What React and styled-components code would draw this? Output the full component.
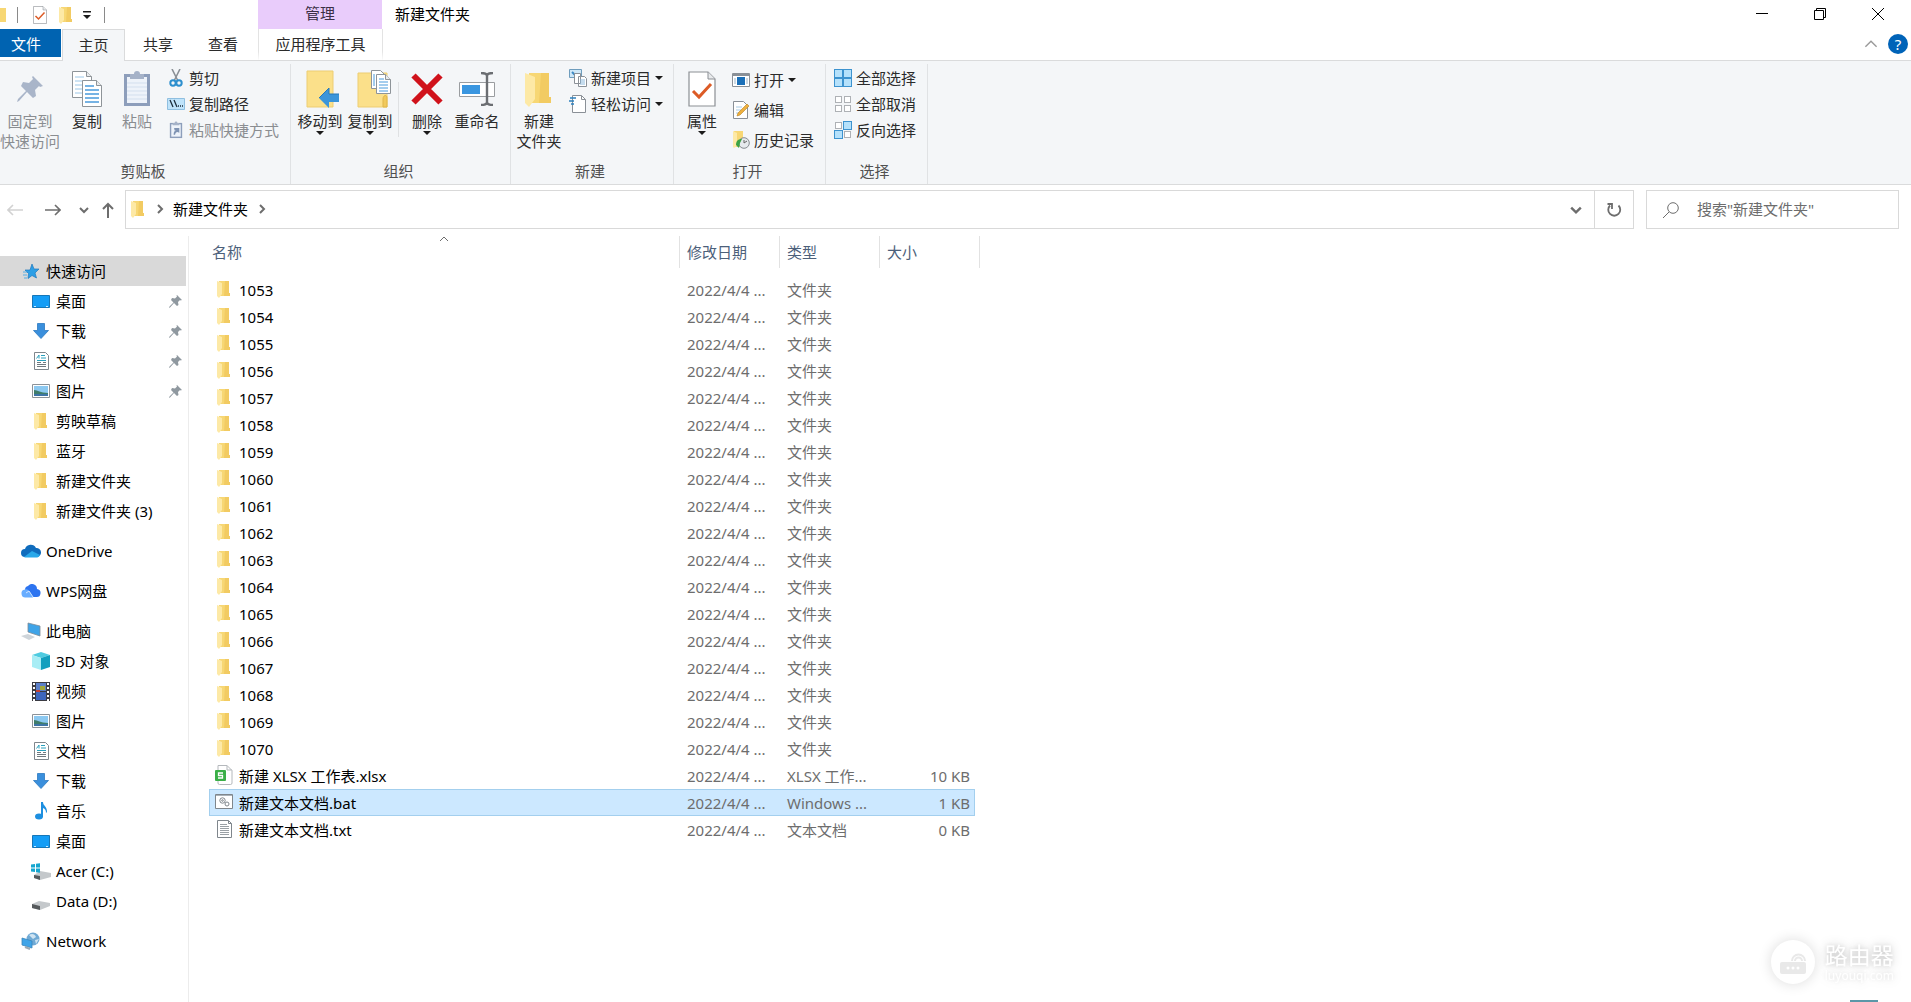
import React from "react";
import styled, { createGlobalStyle, css } from "styled-components";

const GlobalStyle = createGlobalStyle`
  *, *::before, *::after { box-sizing: border-box; }
  body {
    margin: 0;
    background: #fff;
    color: #1b1b1b;
    font: 15px/20px "Noto Sans", "Noto Sans CJK SC", sans-serif;
  }
  button, input { font: inherit; color: inherit; }
  svg { display: block; flex: none; }
`;

/* ---------- shared ---------- */

const PlainButton = styled.button`
  display: flex;
  align-items: center;
  justify-content: center;
  margin: 0;
  padding: 0;
  border: 0;
  background: transparent;
  white-space: nowrap;
`;

const Window = styled.div`
  display: flex;
  flex-direction: column;
  min-height: 100vh;
`;

/* ---------- title bar and tabs ---------- */

const TitleBar = styled.header`
  display: flex;
  height: 29px;
  padding-right: 4px;
`;

const QuickBar = styled.div`
  display: flex;
  align-items: center;
  width: 258px;
`;

const QuickButton = styled(PlainButton)`
  width: ${(p) => p.$width || 25}px;
  height: 29px;
`;

const QuickRule = styled.span`
  width: 1px;
  height: 16px;
  background: #8a8a8a;
`;

const ContextTitle = styled.div`
  display: flex;
  align-items: center;
  justify-content: center;
  width: 124px;
  padding-bottom: 4px;
  background: #e9ccfb;
  color: #3b2f45;
`;

const WindowTitle = styled.h1`
  flex: 1;
  margin: 0;
  padding: 4px 13px;
  font-size: 15px;
  font-weight: 400;
  line-height: 20px;
  color: #000;
`;

const WindowButton = styled(PlainButton)`
  width: 58px;
  height: 28px;
`;

const TabRow = styled.nav`
  display: flex;
  height: 31px;
`;

const Tab = styled(PlainButton)`
  width: ${(p) => p.$width}px;
  padding-bottom: 2px;
  border: 1px solid transparent;
  border-bottom: 0;
  color: #2b2b2b;
  ${(p) =>
    p.$kind === "file" &&
    css`
      height: 28px;
      margin-right: 1px;
      background: #0063b1;
      color: #fff;
      padding-right: 9px;
      padding-bottom: 0;
    `}
  ${(p) =>
    p.$kind === "active" &&
    css`
      height: 32px;
      border-color: #dadbdc;
      background: #f4f6f8;
      z-index: 1;
    `}
  ${(p) =>
    p.$kind === "context" &&
    css`
      margin-left: 3px;
      border-image: linear-gradient(#e3e3e3, #e3e3e3 70%, #fff) 1;
      border-width: 0 1px;
    `}
`;

const TabTools = styled.div`
  display: flex;
  align-items: center;
  gap: 10px;
  margin-left: auto;
  padding: 0 3px 2px 0;
`;

const HelpButton = styled(PlainButton)`
  width: 20px;
  height: 20px;
  border-radius: 50%;
  background: #0063b8;
  color: #fff;
`;

/* ---------- ribbon ---------- */

const Ribbon = styled.section`
  display: flex;
  height: 125px;
  padding-top: 3px;
  border: solid #dadbdc;
  border-width: 1px 0;
  background: #f4f6f8;
`;

const Group = styled.div`
  display: flex;
  flex-direction: column;
  justify-content: space-between;
  width: ${(p) => p.$width}px;
  border-right: 1px solid #e0e2e4;
  padding-bottom: 3px;
`;

const GroupBody = styled.div`
  display: flex;
  height: 94px;
  padding-left: ${(p) => p.$inset || 0}px;
`;

const GroupLabel = styled.div`
  padding-right: 4px;
  text-align: center;
  color: #505050;
`;

const BigButton = styled(PlainButton)`
  flex-direction: column;
  justify-content: flex-start;
  width: ${(p) => p.$width || 50}px;
  padding-top: 2px;
  color: ${(p) => (p.$muted ? "#8a8d91" : "#2b2b2b")};
`;

const BigIcon = styled.span`
  display: flex;
  align-items: center;
  justify-content: center;
  height: 45px;
`;

const SmallList = styled.div`
  display: flex;
  flex-direction: column;
  padding: 1px 0 0 ${(p) => p.$inset}px;
`;

const SmallButton = styled(PlainButton)`
  justify-content: flex-start;
  gap: 4px;
  height: ${(p) => p.$height || 26}px;
  color: ${(p) => (p.$muted ? "#8a8d91" : "#2b2b2b")};
`;

const BodyRule = styled.span`
  width: 1px;
  height: 55px;
  margin: 18px 3px 0;
  background: #dfe1e3;
`;

/* ---------- address row ---------- */

const AddressRow = styled.div`
  display: flex;
  padding: 5px 12px 5px 0;
`;

const NavButtons = styled.div`
  display: flex;
  align-items: center;
  width: 125px;
`;

const NavButton = styled(PlainButton)`
  width: ${(p) => p.$width}px;
  height: 39px;
`;

const AddressBox = styled.div`
  display: flex;
  flex: 1;
  height: 39px;
  border: 1px solid #d9d9d9;
`;

const Crumbs = styled.div`
  display: flex;
  align-items: center;
  flex: 1;
  padding: 0 0 2px 5px;
`;

const Crumb = styled(PlainButton)`
  padding: 0 9px 0 8px;
  color: #000;
`;

const CrumbArrow = styled.span`
  display: flex;
  padding-left: ${(p) => p.$inset || 0}px;
`;

const AddressTool = styled(PlainButton)`
  width: ${(p) => p.$width}px;
  border-left: ${(p) => (p.$ruled ? "1px solid #d9d9d9" : "0")};
`;

const SearchBox = styled.label`
  display: flex;
  align-items: center;
  gap: 18px;
  width: 253px;
  height: 39px;
  margin-left: 12px;
  padding-left: 16px;
  border: 1px solid #d9d9d9;
`;

const SearchInput = styled.input`
  flex: 1;
  min-width: 0;
  height: 37px;
  padding: 0 0 2px;
  border: 0;
  outline: 0;
  background: transparent;
  &::placeholder { color: #6d6d6d; opacity: 1; }
`;

/* ---------- body ---------- */

const Body = styled.div`
  display: flex;
  flex: 1;
  padding-top: 2px;
`;

const Sidebar = styled.nav`
  display: flex;
  flex-direction: column;
  gap: 10px;
  width: 189px;
  padding: 20px 2px 0 0;
  border-right: 1px solid #ececec;
`;

const SideGroup = styled.div`
  display: flex;
  flex-direction: column;
`;

const SideLink = styled.a`
  display: flex;
  align-items: center;
  gap: ${(p) => (p.$child ? 6 : 5)}px;
  height: 30px;
  padding: 0 4px 0 ${(p) => (p.$child ? 32 : 21)}px;
  background: ${(p) => (p.$selected ? "#d9d9d9" : "transparent")};
  color: #000;
  text-decoration: none;
  white-space: nowrap;
`;

const SideIcon = styled.span`
  display: flex;
  justify-content: center;
  width: ${(p) => (p.$child ? 18 : 20)}px;
`;

const SidePin = styled.span`
  margin-left: auto;
`;

const Files = styled.main`
  flex: 1;
  padding-left: 20px;
`;

const Table = styled.table`
  table-layout: fixed;
  width: 771px;
  border-spacing: 0;
`;

const HeadCell = styled.th`
  position: relative;
  height: 32px;
  padding: 0 0 0 ${(p) => (p.$first ? 3 : 7)}px;
  border-right: 1px solid #e2e2e2;
  color: #4c607a;
  font-weight: 400;
  text-align: left;
`;

const SortMark = styled.span`
  position: absolute;
  top: -2px;
  right: 0;
  left: 0;
  display: flex;
  justify-content: center;
`;

const Rows = styled.tbody`
  &::before { content: ""; display: block; height: 8px; }
`;

const Cell = styled.td`
  height: 27px;
  padding: 0 5px 0 7px;
  border: solid transparent;
  border-width: 1px 0;
  color: #6d6d6d;
  white-space: nowrap;
  text-align: ${(p) => (p.$right ? "right" : "left")};
  ${(p) =>
    p.$selected &&
    css`
      border-color: #a3cfee;
      background: #cce8ff;
      &:first-child { border-left: 1px solid #a3cfee; }
      &:last-child { border-right: 1px solid #a3cfee; padding-right: 4px; }
    `}
  &:first-child { padding-left: ${(p) => (p.$selected ? 5 : 6)}px; }
`;

const FileName = styled.span`
  display: flex;
  align-items: center;
  gap: 6px;
  color: #000;
`;

const FileIcon = styled.span`
  display: flex;
  justify-content: center;
  width: 18px;
  padding-bottom: 2px;
`;

/* ---------- floating mark ---------- */

const Mark = styled.aside`
  position: fixed;
  right: 17px;
  bottom: 18px;
  display: flex;
  align-items: center;
  gap: 10px;
  color: #fff;
`;

const MarkDisc = styled.span`
  display: flex;
  align-items: center;
  justify-content: center;
  width: 44px;
  height: 44px;
  border-radius: 50%;
  background: #fff;
  box-shadow: 0 0 14px rgba(0, 0, 0, 0.14);
`;

const MarkText = styled.span`
  display: flex;
  flex-direction: column;
  text-shadow: 0 0 12px rgba(0, 0, 0, 0.22), 0 0 5px rgba(0, 0, 0, 0.14);
`;

const MarkName = styled.span`
  font-family: "Noto Sans CJK SC", sans-serif;
  font-size: 23px;
  line-height: 28px;
`;

const MarkSite = styled.span`
  font-size: 12px;
  line-height: 16px;
`;

const EdgeBar = styled.span`
  position: fixed;
  right: 33px;
  bottom: 0;
  width: 28px;
  height: 2px;
  background: #5b97a8;
`;

/* ---------- icons ---------- */

const Folder = ({ w = 14, h = 18 }) => (
  <svg width={w} height={h} viewBox="1 0 14 18">
    <path d="M3 1h10v12l1 0v3H3z" fill="#f7d774" />
    <path d="M9 1h4v12h1v3H8z" fill="#f2cb62" />
    <path d="M1 1l5 2v11l-3 4-2-2z" fill="#fde9a6" />
  </svg>
);

const Caret = ({ size = 6 }) => (
  <svg width={size} height={size / 2} viewBox="0 0 6 3">
    <path d="M0 0h6L3 3z" fill="#1b1b1b" />
  </svg>
);

const Chevron = ({ dir = "down", size = 10, color = "#6d6d6d", width = 2 }) => {
  const d = { down: "M1 3l4 4 4-4", up: "M1 7l4-4 4 4", right: "M3 1l4 4-4 4" }[dir];
  return (
    <svg width={size} height={size} viewBox="0 0 10 10" fill="none">
      <path d={d} stroke={color} strokeWidth={width} />
    </svg>
  );
};

const Pin = ({ size = 13, color = "#8f989f" }) => (
  <svg width={size} height={size} viewBox="0 0 26 26">
    <path d="M16 0l10 10-3 1-1-1-4 4 1 6-3 2-6-6-8 9-2 1 1-3 8-8-5-5 2-4 6 1 4-4-1-2z" fill={color} />
  </svg>
);

const CheckDoc = ({ w, h }) => (
  <svg width={w} height={h} viewBox="0 0 28 36">
    <path d="M1 1h19l7 7v27H1z" fill="#fff" stroke="#8b8f94" strokeWidth="1.2" />
    <path d="M20 1v7h7" fill="#e8eaec" stroke="#8b8f94" />
    <path d="M5 20l6 6L23 13" fill="none" stroke="#dc5b26" strokeWidth="3" />
  </svg>
);

const CopyIcon = () => (
  <svg width="30" height="38" viewBox="0 0 30 38" fill="#fff" stroke="#8e9499">
    <path d="M.5 1.5h14l5 5v21H.5z" />
    <path d="M14.500 1.500v5h5" fill="#e8eaec" />
    <path d="M3 7h9M3 11h12M3 15h7M3 19h7M3 23h7" stroke="#9cc7e8" />
    <path d="M10.500 10.500h14l5 5v21h-19z" />
    <path d="M24.500 10.500v5h5" fill="#e8eaec" />
    <path d="M13 16h9M13 20h14M13 24h14M13 28h14M13 32h14" stroke="#4a9bdc" strokeWidth="1.300" />
  </svg>
);

const PasteIcon = ({ w = 28, h = 38, link }) => (
  <svg width={w} height={h} viewBox="0 0 28 38">
    <path d="M1 4h26v32H1z" fill="#8d9ebb" />
    <path d="M4 7h20v26H4z" fill="#eef3fa" />
    <path d="M7 9V4h4a3 3 0 0 1 6 0h4v5z" fill="#a5b2c8" />
    {link ? (
      <path d="M9 29c0-7 2-9 6-9h-4l-1-5h11v10l-4-2c-3 0-4 2-5 6z" fill="#7f93b3" />
    ) : (
      <path d="M4 13h20M4 17h20M4 21h20M4 25h20M4 29h20" stroke="#d3dfee" />
    )}
  </svg>
);

const ScissorsIcon = () => (
  <svg width="18" height="18" viewBox="0 0 18 18" fill="none">
    <path d="M5 0l6 12M13 0L7 12" stroke="#8b9096" strokeWidth="1.600" />
    <circle cx="6" cy="14" r="2.700" stroke="#2d8fce" strokeWidth="2" />
    <circle cx="12" cy="14" r="2.700" stroke="#2d8fce" strokeWidth="2" />
  </svg>
);

const PathIcon = () => (
  <svg width="18" height="12" viewBox="0 0 18 12">
    <path d="M.5.500h17v11H.5z" fill="#bfe3fa" stroke="#8fbfe0" />
    <path d="M3 2l3 7M7 2l3 7" stroke="#1b2c3b" strokeWidth="1.300" />
    <path d="M11 8h1M13 8h1M15 8h1" stroke="#1b2c3b" strokeWidth="1.500" />
  </svg>
);

const MoveIcon = () => (
  <svg width="40" height="38" viewBox="-6 0 40 38">
    <path d="M1 1h26v36H1z" fill="#fbe08a" stroke="#edcd72" />
    <path d="M13 28l10-10v6h10v8H23v6z" fill="#3b95da" />
    <path d="M13 28l10-10v6h10" fill="none" stroke="#2678b8" />
  </svg>
);

const CopyToIcon = () => (
  <svg width="44" height="40" viewBox="-8 0 44 40">
    <path d="M2 4h29v34H2z" fill="#fbe08a" stroke="#edcd72" />
    <path d="M27 38V30c0-4 4-5 4-1v9z" fill="#f1c95c" stroke="#dfb548" />
    <g fill="#fff" stroke="#8e9499">
      <path d="M15.500 1.500h9l4 4v14h-13z" />
      <path d="M20.500 5.500h9l5 5v14h-14z" />
      <path d="M29.500 5.500v5h5" fill="#e8eaec" />
      <path d="M18 5v12M23 10h5M23 13h9M23 16h9M23 19h9M23 22h9" stroke="#4a9bdc" />
    </g>
  </svg>
);

const DeleteIcon = () => (
  <svg width="32" height="32" viewBox="0 0 32 32">
    <path d="M2.500 2.500l27 27M29.500 2.500l-27 27" stroke="#d0121b" strokeWidth="6" />
  </svg>
);

const RenameIcon = () => (
  <svg width="36" height="34" viewBox="0 0 36 34" fill="none">
    <path d="M.5 10.500h35v14H.5z" fill="#fff" stroke="#9a9da0" />
    <path d="M3 13h18v9H3z" fill="#3a96e0" />
    <path d="M22 1c3 0 6 1 6 3 0-2 3-3 6-3M22 33c3 0 6-1 6-3 0 2 3 3 6 3M28 3v28" stroke="#6b6e72" strokeWidth="2.400" />
  </svg>
);

const NewItemIcon = () => (
  <svg width="18" height="18" viewBox="0 0 18 18" fill="#fff" stroke="#8a9097">
    <path d="M.5.500h12v8H.5z" fill="#cfe8f8" stroke="#6f9dbd" />
    <path d="M3 3l3 3" stroke="#3b89c4" strokeWidth="2" />
    <path d="M5.500 4.500h6v10h-6zM9.500 7.500h6l2 2v8h-8z" />
    <path d="M11 11h5M11 13h5M11 15h5" stroke="#8ab8dc" />
  </svg>
);

const EasyIcon = () => (
  <svg width="18" height="18" viewBox="0 0 18 18" fill="none">
    <path d="M3.500.500h9l4 4v13h-13z" fill="#fff" stroke="#8a9097" />
    <path d="M12.500.500v4h4" stroke="#8a9097" />
    <path d="M1 3h6M0 6h5M2 9h3" stroke="#2d80bd" strokeWidth="1.300" />
  </svg>
);

const OpenIcon = () => (
  <svg width="18" height="14" viewBox="0 0 18 14">
    <path d="M.5.500h17v13H.5z" fill="#fff" stroke="#8a9097" />
    <path d="M1 1h16v2H1z" fill="#8a9097" />
    <path d="M5 4h8v8H5z" fill="#1a6fb8" />
    <path d="M2 6h2M2 8h2M2 10h2M14 6h2M14 8h2M14 10h2" stroke="#9bb4c8" />
  </svg>
);

const EditIcon = () => (
  <svg width="18" height="18" viewBox="0 0 18 18">
    <path d="M1.500.500h10l4 4v13h-14z" fill="#fff" stroke="#8a9097" />
    <path d="M4 6h6M4 9h5M4 12h3" stroke="#a9cbe4" />
    <path d="M5 15l1-3 9-9 2 2-9 9z" fill="#eeb03e" stroke="#b98222" strokeWidth=".6" />
  </svg>
);

const HistoryIcon = () => (
  <svg width="18" height="18" viewBox="0 0 18 18">
    <path d="M2 0h9v16H2z" fill="#f7d774" />
    <path d="M1 0l4 2v13l-3 2-1-1z" fill="#fde9a6" />
    <circle cx="12" cy="12" r="5.300" fill="#e6eaed" stroke="#858b90" />
    <path d="M12 9v3l3-2" stroke="#666" fill="none" />
    <path d="M4 14c0-4 2-6 6-6l-2 4-1 5z" fill="#3ba345" />
  </svg>
);

const SelectIcon = ({ on }) => (
  <svg width="18" height="18" viewBox="0 0 18 18">
    {[0, 1, 2, 3].map((i) => {
      const lit = on.includes(i);
      const big = lit ? 8 : 6;
      return (
        <rect
          key={i}
          x={(i % 2) * 9 + (lit ? 0.5 : 1.5)}
          y={Math.floor(i / 2) * 9 + (lit ? 0.5 : 1.5)}
          width={big}
          height={big}
          fill={lit ? "#b5e1fb" : "#fff"}
          stroke={lit ? "#3d93cf" : "#aeb1b5"}
        />
      );
    })}
  </svg>
);

const Arrow = ({ dir, color }) => (
  <svg width="16" height="16" viewBox="0 0 16 16" fill="none" stroke={color} strokeWidth="1.600">
    {dir === "left" && <path d="M16 8H1M6 3L1 8l5 5" />}
    {dir === "right" && <path d="M0 8h15M10 3l5 5-5 5" />}
    {dir === "up" && <path d="M8 16V2M3 7l5-5 5 5" strokeWidth="2" />}
  </svg>
);

const RefreshIcon = () => (
  <svg width="16" height="16" viewBox="0 0 16 16" fill="none" stroke="#6d6d6d" strokeWidth="1.800">
    <path d="M12.500 3.500A6 6 0 1 1 4 3.500" />
    <path d="M1.500 2H6v5" />
  </svg>
);

const SearchIcon = () => (
  <svg width="16" height="16" viewBox="0 0 16 16" fill="none" stroke="#6d6d6d">
    <circle cx="10" cy="6" r="5.300" />
    <path d="M6 10l-6 6" />
  </svg>
);

const sideIcons = {
  star: (
    <svg width="18" height="18" viewBox="0 0 18 18">
      <path d="M10 2l2 5 5 0-4 4 1.500 5-4.500-2.500-4 3 .5-5L3 8h5z" fill="#2d9fe6" stroke="#1f79bd" strokeWidth=".7" />
      <path d="M1 10h4M1 13h4M2 16h3" stroke="#55aee6" />
    </svg>
  ),
  desktop: (
    <svg width="18" height="13" viewBox="0 0 18 13">
      <path d="M.5.500h17v12H.5z" fill="#149df6" stroke="#1677b8" />
      <path d="M2 11.500h2M14 11.500h2" stroke="#cdeaff" />
    </svg>
  ),
  download: (
    <svg width="16" height="16" viewBox="0 0 16 16">
      <path d="M4.500.500h7v7h4L8 15.500.500 7.500h4z" fill="#3a8fdc" stroke="#2b78c0" strokeWidth=".8" />
    </svg>
  ),
  doc: (
    <svg width="15" height="18" viewBox="0 0 15 18">
      <path d="M.5.500h11l3 3v14H.5z" fill="#fff" stroke="#7f868c" />
      <path d="M2.500 6.500L5 3v3.500M7 3.500h4M7 6h5M3 8.500h9" stroke="#2aa0bd" fill="none" />
      <path d="M3 10.500h4M3 12.500h9M3 14.500h9M9 10.500h3" stroke="#70797f" />
    </svg>
  ),
  picture: (
    <svg width="18" height="14" viewBox="0 0 18 14">
      <path d="M.5.500h17v13H.5z" fill="#fff" stroke="#8c9399" />
      <path d="M2 2h14v10H2z" fill="#8cc9f1" />
      <path d="M2 6c4 0 6 3 14 3v2H2z" fill="#3f7d6b" />
      <path d="M2 10h14v2H2z" fill="#3d74a6" />
    </svg>
  ),
  folder: <Folder />,
  onedrive: (
    <svg width="20" height="14" viewBox="0 0 20 14">
      <path d="M4 13a4 4 0 0 1 0-8 6 6 0 0 1 11-1 4.500 4.500 0 0 1 1 9z" fill="#0f6cbd" />
      <path d="M3 13l8-6 8 4c-1 2-2 2.500-4 2.500H4z" fill="#28a8ea" />
    </svg>
  ),
  wps: (
    <svg width="20" height="14" viewBox="0 0 20 14">
      <path d="M6 13h9a4 4 0 0 0 1-8 5 5 0 0 0-9-3 4 4 0 0 0-3 4z" fill="#2d74f0" />
      <path d="M5 13.500a4 4 0 0 1-1-8c3-1 5 2 8 8z" fill="#68adff" />
      <path d="M5 9l3-2 4 6" fill="none" stroke="#cfe3ff" />
    </svg>
  ),
  pc: (
    <svg width="20" height="18" viewBox="0 0 20 18">
      <path d="M7 1l12 3v10L7 10z" fill="#3fa4e8" stroke="#7d8b97" strokeWidth=".8" />
      <path d="M0 14l7-2 7 3-6 3z" fill="#cfd5da" />
    </svg>
  ),
  cube: (
    <svg width="18" height="18" viewBox="0 0 18 18">
      <path d="M0 3l9-3 9 3-9 3z" fill="#4fcbe0" />
      <path d="M0 3l9 3v12l-9-3z" fill="#a8edf5" />
      <path d="M18 3L9 6v12l9-3z" fill="#129fbe" />
    </svg>
  ),
  video: (
    <svg width="18" height="19" viewBox="0 0 18 19">
      <path d="M0 0h18v19H0z" fill="#3b3b42" />
      <path d="M4 1h10v8H4z" fill="#5c80c9" />
      <path d="M4 10h10v8H4z" fill="#3d66bd" />
      <path d="M8 4h5v4H8z" fill="#a2a83c" />
      <path d="M4 8h4v2H4z" fill="#c43f35" />
      <path d="M2 1v18M16 1v18" stroke="#fff" strokeWidth="2" strokeDasharray="2 2" />
    </svg>
  ),
  music: (
    <svg width="12" height="18" viewBox="0 0 12 18">
      <ellipse cx="4" cy="14.500" rx="4" ry="3" fill="#1d8fe0" />
      <path d="M6 0h2c0 4 4 4 4 10l-1 1c0-3-1-4-3-5v9H6z" fill="#1d8fe0" />
    </svg>
  ),
  system: (
    <svg width="20" height="18" viewBox="0 0 20 18">
      <path d="M3 13l6-4 11 2v4l-11 3-6-2z" fill="#c4c8cb" />
      <path d="M3 13l6 1v4l-6-2z" fill="#55595c" />
      <path d="M0 2.600L4 2v3.500H0zM5 1.800l4-.6v4.300H5zM0 6.500h4V10l-4-.6zM5 6.500h4v4.300l-4-.6z" fill="#16a6cf" />
    </svg>
  ),
  drive: (
    <svg width="18" height="18" viewBox="0 0 18 18">
      <path d="M0 12l7-3 11 2v3l-10 4-8-2z" fill="#c4c8cb" />
      <path d="M0 12l8 2v4l-8-2z" fill="#55595c" />
    </svg>
  ),
  network: (
    <svg width="20" height="18" viewBox="0 0 20 18">
      <circle cx="12" cy="7" r="6.500" fill="#6fa9d4" />
      <path d="M8 3c3-2 6-1 7 2l-3 2zM14 8l4-1-3 5z" fill="#cfe4f2" />
      <path d="M1 6l10 3v7L1 13z" fill="#3fa4e8" stroke="#3b86bb" strokeWidth=".8" />
      <path d="M4 15l5 2" stroke="#9aa9b4" strokeWidth="2" />
    </svg>
  ),
};

const fileIcons = {
  folder: <Folder />,
  xlsx: (
    <svg width="18" height="20" viewBox="0 0 18 20">
      <path d="M3 .5h9l5 5V18q0 1.500-1.500 1.500h-11Q3 19.500 3 18z" fill="#fff" stroke="#b4b8bc" />
      <path d="M12 .5V5h5" fill="none" stroke="#b4b8bc" />
      <rect y="5" width="11" height="11" rx="1" fill="#3aaf47" />
      <path d="M8 8H3.500v2.500h4V13H3" fill="none" stroke="#fff" strokeWidth="1.300" />
    </svg>
  ),
  bat: (
    <svg width="18" height="15" viewBox="0 0 18 15">
      <path d="M.5.500h17v14H.5z" fill="#fff" stroke="#7f868c" />
      <path d="M1 1.500h16" stroke="#a9b2b9" />
      <g fill="none" stroke="#7f868c">
        <circle cx="7.500" cy="6.500" r="2.700" />
        <circle cx="7.500" cy="6.500" r=".8" />
        <circle cx="12" cy="10" r="2" />
      </g>
    </svg>
  ),
  txt: (
    <svg width="15" height="18" viewBox="0 0 15 18">
      <path d="M.5.500h11l3 3v14H.5z" fill="#fff" stroke="#7f868c" />
      <path d="M11.500.500v3h3" fill="none" stroke="#7f868c" />
      <path d="M3 4.500h7M3 6.500h9M3 8.500h9M3 10.500h9M3 12.500h9M3 14.500h9" stroke="#9aa0a5" />
    </svg>
  ),
};

/* ---------- data ---------- */

const sideGroups = [
  [
    { icon: "star", text: "快速访问", selected: true },
    { icon: "desktop", text: "桌面", child: true, pinned: true },
    { icon: "download", text: "下载", child: true, pinned: true },
    { icon: "doc", text: "文档", child: true, pinned: true },
    { icon: "picture", text: "图片", child: true, pinned: true },
    { icon: "folder", text: "剪映草稿", child: true },
    { icon: "folder", text: "蓝牙", child: true },
    { icon: "folder", text: "新建文件夹", child: true },
    { icon: "folder", text: "新建文件夹 (3)", child: true },
  ],
  [{ icon: "onedrive", text: "OneDrive" }],
  [{ icon: "wps", text: "WPS网盘" }],
  [
    { icon: "pc", text: "此电脑" },
    { icon: "cube", text: "3D 对象", child: true },
    { icon: "video", text: "视频", child: true },
    { icon: "picture", text: "图片", child: true },
    { icon: "doc", text: "文档", child: true },
    { icon: "download", text: "下载", child: true },
    { icon: "music", text: "音乐", child: true },
    { icon: "desktop", text: "桌面", child: true },
    { icon: "system", text: "Acer (C:)", child: true },
    { icon: "drive", text: "Data (D:)", child: true },
  ],
  [{ icon: "network", text: "Network" }],
];

const files = [
  ...Array.from({ length: 18 }, (_, i) => ({ icon: "folder", name: String(1053 + i), type: "文件夹", size: "" })),
  { icon: "xlsx", name: "新建 XLSX 工作表.xlsx", type: "XLSX 工作...", size: "10 KB" },
  { icon: "bat", name: "新建文本文档.bat", type: "Windows ...", size: "1 KB", selected: true },
  { icon: "txt", name: "新建文本文档.txt", type: "文本文档", size: "0 KB" },
];

/* ---------- parts ---------- */

const Big = ({ icon, lines, menu, ...rest }) => (
  <BigButton {...rest}>
    <BigIcon>{icon}</BigIcon>
    {lines.map((line) => (
      <span key={line}>{line}</span>
    ))}
    {menu && <Caret size={8} />}
  </BigButton>
);

const Small = ({ icon, text, menu, ...rest }) => (
  <SmallButton {...rest}>
    <SideIcon $child>{icon}</SideIcon>
    {text}
    {menu && <Caret size={8} />}
  </SmallButton>
);

export default function App() {
  return (
    <Window>
      <GlobalStyle />
      <TitleBar>
        <QuickBar>
          <QuickButton $width={17} aria-label="窗口菜单">
            <svg width="17" height="16" viewBox="0 0 17 16">
              <path d="M0 1h6v14H0z" fill="#f7d774" />
            </svg>
          </QuickButton>
          <QuickRule />
          <QuickButton $width={44} aria-label="属性">
            <CheckDoc w={14} h={18} />
          </QuickButton>
          <QuickButton $width={8} aria-label="新建文件夹">
            <Folder />
          </QuickButton>
          <QuickButton $width={34} aria-label="自定义快速访问工具栏">
            <svg width="8" height="8" viewBox="0 0 8 8">
              <path d="M0 0h8v1.500H0zM0 4h8L4 8z" fill="#1b1b1b" />
            </svg>
          </QuickButton>
          <QuickRule />
        </QuickBar>
        <ContextTitle>管理</ContextTitle>
        <WindowTitle>新建文件夹</WindowTitle>
        <WindowButton aria-label="最小化">
          <svg width="12" height="12" viewBox="0 0 12 12"><path d="M0 5.500h12" stroke="#000" /></svg>
        </WindowButton>
        <WindowButton aria-label="还原">
          <svg width="12" height="12" viewBox="0 0 12 12" fill="none" stroke="#000">
            <path d="M.5 2.500h9v9h-9zM2.500 2.500v-2h9v9h-2" />
          </svg>
        </WindowButton>
        <WindowButton aria-label="关闭">
          <svg width="12" height="12" viewBox="0 0 12 12"><path d="M0 0l12 12M12 0L0 12" stroke="#000" /></svg>
        </WindowButton>
      </TitleBar>

      <TabRow>
        <Tab $kind="file" $width={61}>文件</Tab>
        <Tab $kind="active" $width={63}>主页</Tab>
        <Tab $width={66}>共享</Tab>
        <Tab $width={64}>查看</Tab>
        <Tab $kind="context" $width={125}>应用程序工具</Tab>
        <TabTools>
          <PlainButton aria-label="折叠功能区">
            <Chevron dir="up" size={14} color="#9a9a9a" width={1} />
          </PlainButton>
          <HelpButton aria-label="帮助">?</HelpButton>
        </TabTools>
      </TabRow>

      <Ribbon>
        <Group $width={291}>
          <GroupBody>
            <Big $width={60} $muted icon={<Pin size={26} color="#a9b5c9" />} lines={["固定到", "快速访问"]} />
            <Big $width={54} icon={<CopyIcon />} lines={["复制"]} />
            <Big $width={46} $muted icon={<PasteIcon />} lines={["粘贴"]} />
            <SmallList $inset={7}>
              <Small icon={<ScissorsIcon />} text="剪切" />
              <Small icon={<PathIcon />} text="复制路径" />
              <Small $muted icon={<PasteIcon w={14} h={18} link />} text="粘贴快捷方式" />
            </SmallList>
          </GroupBody>
          <GroupLabel>剪贴板</GroupLabel>
        </Group>
        <Group $width={220}>
          <GroupBody $inset={4}>
            <Big icon={<MoveIcon />} lines={["移动到"]} menu />
            <Big icon={<CopyToIcon />} lines={["复制到"]} menu />
            <BodyRule />
            <Big icon={<DeleteIcon />} lines={["删除"]} menu />
            <Big icon={<RenameIcon />} lines={["重命名"]} />
          </GroupBody>
          <GroupLabel>组织</GroupLabel>
        </Group>
        <Group $width={163}>
          <GroupBody $inset={3}>
            <Big icon={<Folder w={28} h={36} />} lines={["新建", "文件夹"]} />
            <SmallList $inset={5}>
              <Small icon={<NewItemIcon />} text="新建项目" menu />
              <Small icon={<EasyIcon />} text="轻松访问" menu />
            </SmallList>
          </GroupBody>
          <GroupLabel>新建</GroupLabel>
        </Group>
        <Group $width={152}>
          <GroupBody $inset={3}>
            <Big icon={<CheckDoc w={28} h={36} />} lines={["属性"]} menu />
            <SmallList $inset={5}>
              <Small $height={30} icon={<OpenIcon />} text="打开" menu />
              <Small $height={30} icon={<EditIcon />} text="编辑" />
              <Small $height={30} icon={<HistoryIcon />} text="历史记录" />
            </SmallList>
          </GroupBody>
          <GroupLabel>打开</GroupLabel>
        </Group>
        <Group $width={102}>
          <GroupBody>
            <SmallList $inset={8}>
              <Small icon={<SelectIcon on={[0, 1, 2, 3]} />} text="全部选择" />
              <Small icon={<SelectIcon on={[]} />} text="全部取消" />
              <Small icon={<SelectIcon on={[1, 2]} />} text="反向选择" />
            </SmallList>
          </GroupBody>
          <GroupLabel>选择</GroupLabel>
        </Group>
      </Ribbon>

      <AddressRow>
        <NavButtons>
          <NavButton $width={30} aria-label="后退"><Arrow dir="left" color="#d2d2d2" /></NavButton>
          <NavButton $width={46} aria-label="前进"><Arrow dir="right" color="#6d6d6d" /></NavButton>
          <NavButton $width={15} aria-label="最近位置"><Chevron /></NavButton>
          <NavButton $width={34} aria-label="上移"><Arrow dir="up" color="#6d6d6d" /></NavButton>
        </NavButtons>
        <AddressBox>
          <Crumbs>
            <Folder />
            <CrumbArrow $inset={10}><Chevron dir="right" /></CrumbArrow>
            <Crumb>新建文件夹</Crumb>
            <CrumbArrow><Chevron dir="right" /></CrumbArrow>
          </Crumbs>
          <AddressTool $width={37} aria-label="展开地址"><Chevron size={12} /></AddressTool>
          <AddressTool $width={39} $ruled aria-label="刷新"><RefreshIcon /></AddressTool>
        </AddressBox>
        <SearchBox>
          <SearchIcon />
          <SearchInput type="text" aria-label="搜索" placeholder={'搜索"新建文件夹"'} />
        </SearchBox>
      </AddressRow>

      <Body>
        <Sidebar>
          {sideGroups.map((group) => (
            <SideGroup key={group[0].text}>
              {group.map((item) => (
                <SideLink key={item.text} href="#" $child={item.child} $selected={item.selected}>
                  <SideIcon $child={item.child}>{sideIcons[item.icon]}</SideIcon>
                  {item.text}
                  {item.pinned && <SidePin><Pin /></SidePin>}
                </SideLink>
              ))}
            </SideGroup>
          ))}
        </Sidebar>
        <Files>
          <Table>
            <colgroup>
              <col width="471" />
              <col width="100" />
              <col width="100" />
              <col width="95" />
              <col width="5" />
            </colgroup>
            <thead>
              <tr>
                <HeadCell $first scope="col">
                  名称
                  <SortMark><Chevron dir="up" color="#6d6d6d" width={1} /></SortMark>
                </HeadCell>
                <HeadCell scope="col">修改日期</HeadCell>
                <HeadCell scope="col">类型</HeadCell>
                <HeadCell scope="col" colSpan={2}>大小</HeadCell>
              </tr>
            </thead>
            <Rows>
              {files.map((file) => (
                <tr key={file.name}>
                  <Cell $selected={file.selected}>
                    <FileName>
                      <FileIcon>{fileIcons[file.icon]}</FileIcon>
                      {file.name}
                    </FileName>
                  </Cell>
                  <Cell $selected={file.selected}>2022/4/4 ...</Cell>
                  <Cell $selected={file.selected}>{file.type}</Cell>
                  <Cell $selected={file.selected} $right>{file.size}</Cell>
                </tr>
              ))}
            </Rows>
          </Table>
        </Files>
      </Body>

      <Mark>
        <MarkDisc>
          <svg width="28" height="26" viewBox="0 0 28 26" fill="none">
            <rect x="1" y="13" width="26" height="12" rx="2" fill="#e9e9e9" />
            <path d="M13 12a6.500 6.500 0 0 1 13 0M16 12a3.500 3.500 0 0 1 7 0" stroke="#e9e9e9" strokeWidth="2" />
            <g fill="#fff">
              <circle cx="9" cy="19" r="1.500" />
              <circle cx="14" cy="19" r="1.500" />
              <circle cx="19" cy="19" r="1.500" />
            </g>
          </svg>
        </MarkDisc>
        <MarkText>
          <MarkName>路由器</MarkName>
          <MarkSite>luyouqi.com</MarkSite>
        </MarkText>
      </Mark>
      <EdgeBar />
    </Window>
  );
}
